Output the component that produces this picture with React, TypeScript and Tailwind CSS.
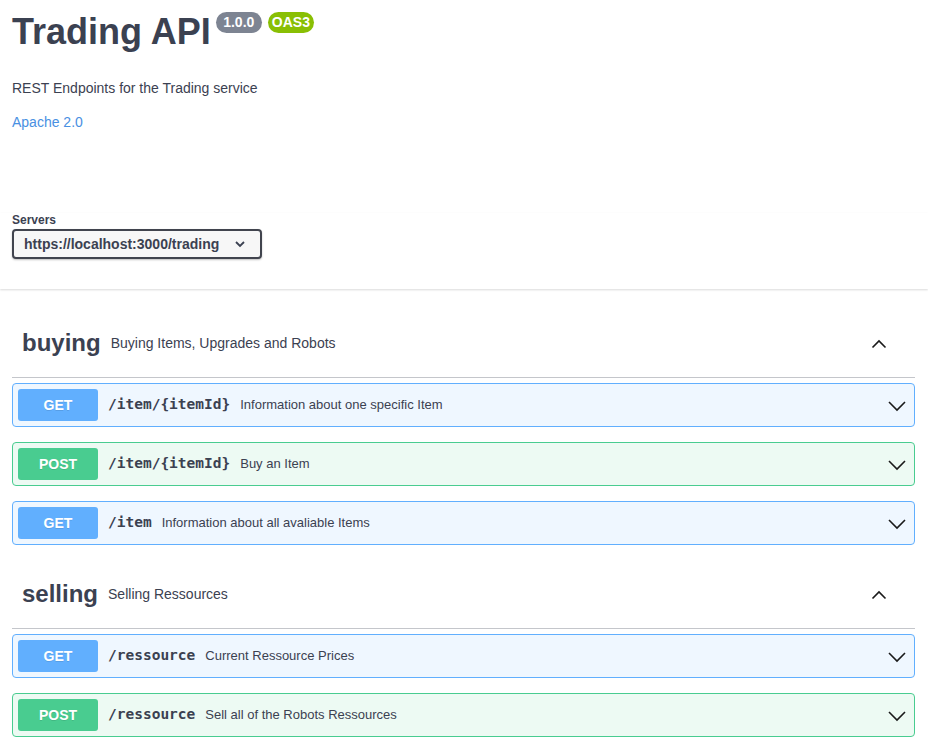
import React from "react";

const ChevronUp = () => (
  <svg width="20" height="20" viewBox="0 0 20 20" className="block">
    <path d="M3.5 14.5 L10 8 L16.5 14.5" fill="none" stroke="#1a1a1a" strokeWidth="1.6" />
  </svg>
);

const ChevronDown = () => (
  <svg width="20" height="20" viewBox="0 0 20 20" className="block">
    <path d="M2 7 L10 15 L18 7" fill="none" stroke="#1a1a1a" strokeWidth="1.6" />
  </svg>
);

type Op = { method: "GET" | "POST"; path: string; desc: string };

const OpBlock = ({ op }: { op: Op }) => {
  const get = op.method === "GET";
  return (
    <div
      className={
        "mb-[15px] flex h-[44px] items-center rounded-[4px] border px-[5px] " +
        (get ? "border-[#61affe] bg-[#eff7ff]" : "border-[#49cc90] bg-[#edfaf3]")
      }
    >
      <div
        className={
          "flex h-[32px] w-[80px] items-center justify-center rounded-[3px] text-[14px] font-bold text-white " +
          (get ? "bg-[#61affe]" : "bg-[#49cc90]")
        }
        style={{ fontFamily: '"Liberation Sans", Arial, sans-serif', textShadow: "0 1px 0 rgba(0,0,0,.1)" }}
      >
        {op.method}
      </div>
      <span
        className="pl-[10px] pr-[10px] text-[14.5px] font-bold text-[#3b4151]"
        style={{ fontFamily: '"DejaVu Sans Mono", monospace' }}
      >
        {op.path}
      </span>
      <span className="flex-1 text-[13px] text-[#3b4151]">{op.desc}</span>
      <div className="pr-[2px]">
        <ChevronDown />
      </div>
    </div>
  );
};

const Tag = ({ name, desc, ops }: { name: string; desc: string; ops: Op[] }) => (
  <div>
    <div className="mb-[5px] flex h-[69px] items-center border-b border-[#c4c6cb] pl-[10px] pr-[26px]">
      <span className="text-[24px] font-bold text-[#3b4151]">{name}</span>
      <span className="flex-1 pl-[10px] text-[14px] text-[#3b4151]">{desc}</span>
      <ChevronUp />
    </div>
    {ops.map((o, i) => (
      <OpBlock key={i} op={o} />
    ))}
  </div>
);

export default function App() {
  return (
    <div
      className="min-h-[755px] bg-white text-[#3b4151]"
      style={{ fontFamily: '"Liberation Sans", Arial, sans-serif' }}
    >
      <div className="px-[12px] pt-[8px]">
        <div className="flex items-start">
          <h1 className="text-[36px] font-bold leading-[48px] text-[#3b4151]">Trading API</h1>
          <div className="ml-[5px] mt-[4px] flex gap-[6px]">
            <span className="rounded-[57px] bg-[#7d8492] px-[7.5px] py-[3px] text-[14px] font-bold leading-[15px] text-white">
              1.0.0
            </span>
            <span className="rounded-[57px] bg-[#89bf04] px-[4px] py-[3px] text-[14px] font-bold leading-[15px] text-white">
              OAS3
            </span>
          </div>
        </div>
        <p className="mt-[24px] text-[14px] leading-[16px]">REST Endpoints for the Trading service</p>
        <a className="mt-[18px] block text-[14px] leading-[16px] text-[#4990e2]">Apache 2.0</a>
      </div>
      <div className="mt-[83px] px-[12px] pb-[30px] shadow-[0_1px_2px_0_rgba(0,0,0,0.15)]">
        <div className="text-[12px] font-bold leading-[14px]">Servers</div>
        <div className="mt-[2px] flex h-[30px] w-[250px] items-center justify-between rounded-[4px] border-2 border-[#41444e] bg-[#f7f7f7] pl-[10px] pr-[14px] shadow-[0_1px_2px_0_rgba(0,0,0,0.25)]">
          <span className="text-[14px] font-bold">https://localhost:3000/trading</span>
          <svg width="12" height="12" viewBox="0 0 12 12">
            <path d="M2 4 L6 8 L10 4" fill="none" stroke="#3b4151" strokeWidth="1.8" />
          </svg>
        </div>
      </div>
      <div className="px-[12px] pr-[13px] pt-[20px]">
        <Tag
          name="buying"
          desc="Buying Items, Upgrades and Robots"
          ops={[
            { method: "GET", path: "/item/{itemId}", desc: "Information about one specific Item" },
            { method: "POST", path: "/item/{itemId}", desc: "Buy an Item" },
            { method: "GET", path: "/item", desc: "Information about all avaliable Items" },
          ]}
        />
        <Tag
          name="selling"
          desc="Selling Ressources"
          ops={[
            { method: "GET", path: "/ressource", desc: "Current Ressource Prices" },
            { method: "POST", path: "/ressource", desc: "Sell all of the Robots Ressources" },
          ]}
        />
      </div>
    </div>
  );
}
